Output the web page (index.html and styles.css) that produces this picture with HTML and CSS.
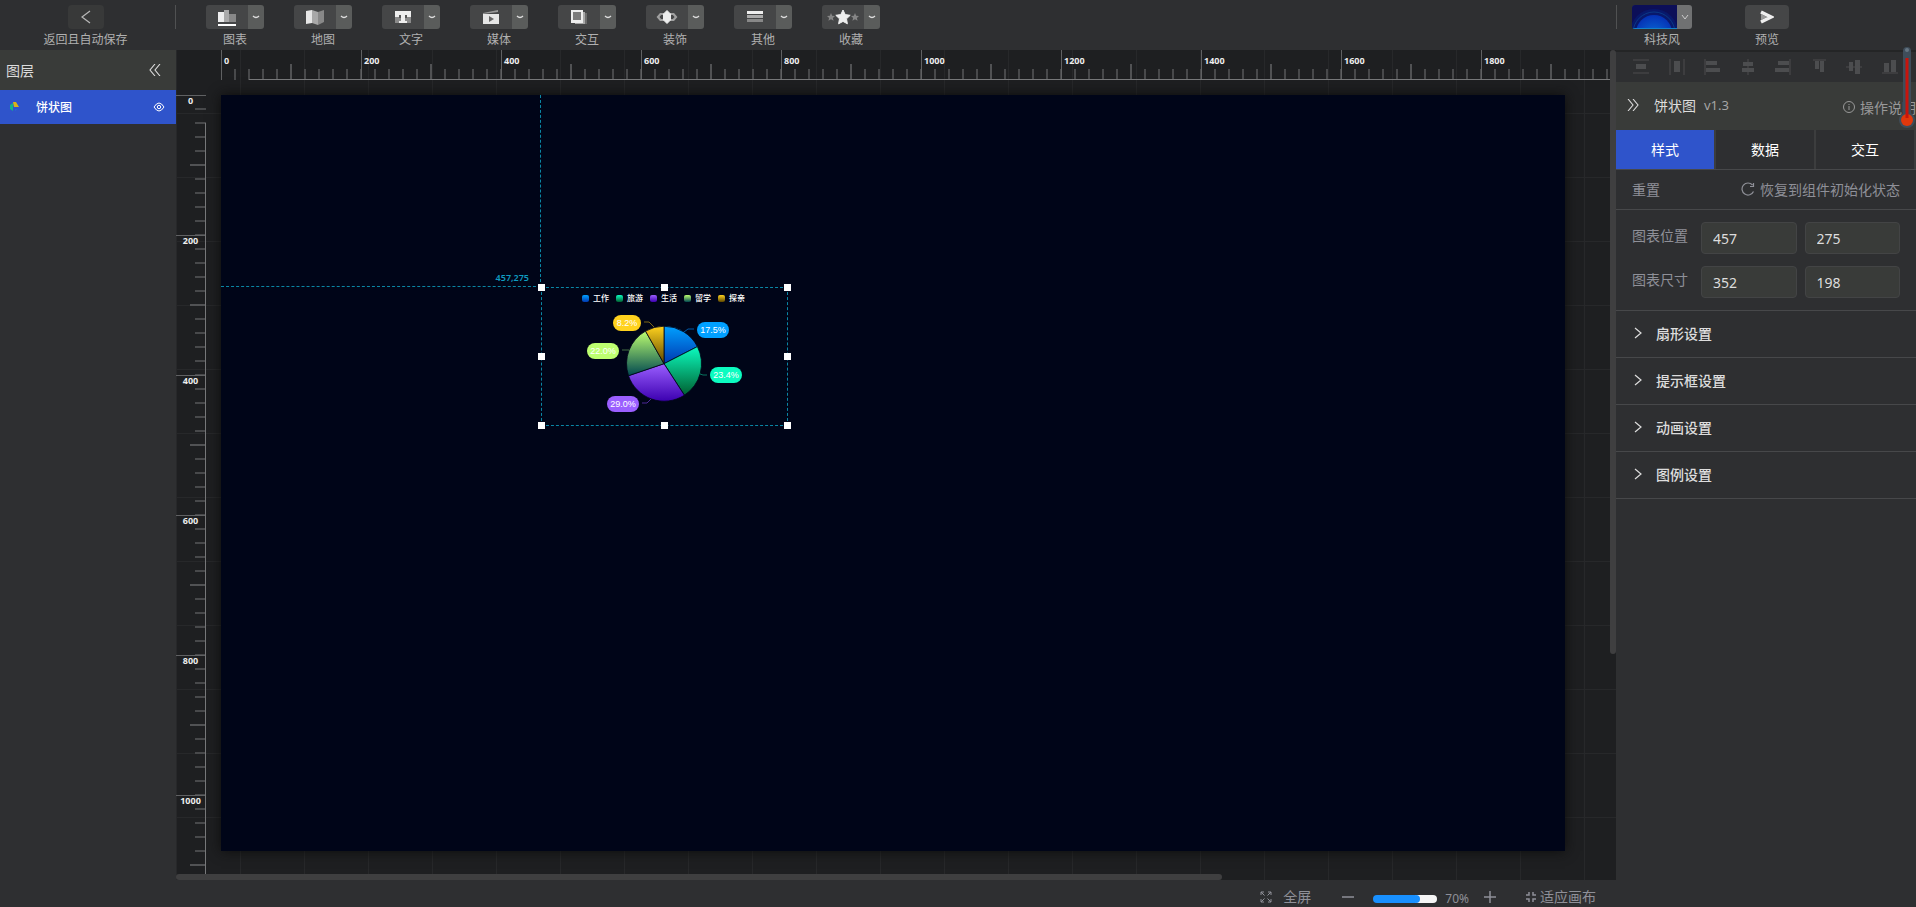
FILE: index.html
```html
<!DOCTYPE html>
<html lang="zh-CN">
<head>
  <meta charset="UTF-8" />
  <meta name="viewport" content="width=device-width, initial-scale=1" />
  <title>大屏编辑器</title>
  <link rel="stylesheet" href="styles.css">
</head>
<body>

  <!-- 图标 -->
  <svg class="defs" width="0" height="0" aria-hidden="true">
    <symbol id="i-down" viewBox="0 0 8 8"><path d="M1 3 Q4 6 7 3" fill="none" stroke="currentColor" stroke-width="1.3"/></symbol>
    <symbol id="i-right" viewBox="0 0 8 12"><path d="M1 1l6 5-6 5" fill="none" stroke="currentColor" stroke-width="1.2"/></symbol>
  </svg>

  <header class="topbar">
    <div class="tool back">
      <button class="btn" id="back" aria-labelledby="back-t">
        <svg width="10" height="14" viewBox="0 0 10 14"><path d="M9 1L1 7l8 6" fill="none" stroke="#b8b8b8" stroke-width="1.2"/></svg>
      </button>
      <span id="back-t">返回且自动保存</span>
    </div>
    <nav class="tools">
      <div class="tool">
        <div class="split">
          <button class="main" aria-label="图表"><svg width="20" height="18" viewBox="0 0 20 18"><path d="M1 4h7v10H1z" fill="#eee"/><path d="M7 2h5v12H7z" fill="#aaa"/><path d="M12 6h7v8h-7z" fill="#888"/><path d="M1 16h18v2H1z" fill="#fff"/></svg></button>
          <button class="more" aria-label="更多图表"><svg width="8" height="8"><use href="#i-down"/></svg></button>
        </div>
        <span>图表</span>
      </div>
      <div class="tool">
        <div class="split">
          <button class="main" aria-label="地图"><svg width="20" height="16" viewBox="0 0 20 16"><path d="M1 2l6-1v13l-6 1z" fill="#e6e6e6"/><path d="M7 1l6 2v13l-6-2z" fill="#a8a8a8"/><path d="M13 3l6-2v12l-6 3z" fill="#888"/></svg></button>
          <button class="more" aria-label="更多地图"><svg width="8" height="8"><use href="#i-down"/></svg></button>
        </div>
        <span>地图</span>
      </div>
      <div class="tool">
        <div class="split">
          <button class="main" aria-label="文字"><svg width="18" height="14" viewBox="0 0 18 14"><path d="M1 7h16v6H1z" fill="#8a8a8a"/><path d="M1 1h16v6H1z" fill="#eee"/><path d="M5 5h8v3H5z" fill="#555"/><path d="M7 4h4v7h2v2H5v-2h2z" fill="#eee"/></svg></button>
          <button class="more" aria-label="更多文字"><svg width="8" height="8"><use href="#i-down"/></svg></button>
        </div>
        <span>文字</span>
      </div>
      <div class="tool">
        <div class="split">
          <button class="main" aria-label="媒体"><svg width="18" height="14" viewBox="0 0 18 14"><path d="M1 3l15-3v2L1 4z" fill="#999"/><path d="M1 4h16v10H1z" fill="#e6e6e6"/><path d="M7 6l5 3-5 3z" fill="#666"/></svg></button>
          <button class="more" aria-label="更多媒体"><svg width="8" height="8"><use href="#i-down"/></svg></button>
        </div>
        <span>媒体</span>
      </div>
      <div class="tool">
        <div class="split">
          <button class="main" aria-label="交互"><svg width="16" height="16" viewBox="0 0 16 16"><path d="M11 4h5v11H9z" fill="#6c6c6c"/><path d="M11 3h3v12H4v-2h7z" fill="#a8a8a8"/><path d="M0 1h12v13H0z" fill="#eee"/><path d="M2 3h8v8H2z" fill="#7c7c7c"/></svg></button>
          <button class="more" aria-label="更多交互"><svg width="8" height="8"><use href="#i-down"/></svg></button>
        </div>
        <span>交互</span>
      </div>
      <div class="tool">
        <div class="split">
          <button class="main" aria-label="装饰"><svg width="22" height="16" viewBox="0 0 22 16"><path d="M8 5H4.500L2 8l2.500 3H8M14 5h3.500L20 8l-2.500 3H14" fill="none" stroke="#a0a0a0" stroke-width="2.200"/><path d="M11 1.500l3.500 3.500v6L11 14.500 7.500 11V5z" fill="#eee" stroke="#eee" stroke-linejoin="round"/></svg></button>
          <button class="more" aria-label="更多装饰"><svg width="8" height="8"><use href="#i-down"/></svg></button>
        </div>
        <span>装饰</span>
      </div>
      <div class="tool">
        <div class="split">
          <button class="main" aria-label="其他"><svg width="16" height="12" viewBox="0 0 16 12"><path d="M0 0h16v3H0z" fill="#eee"/><path d="M0 4h16v3H0z" fill="#aaa"/><path d="M0 8h16v3H0z" fill="#888"/></svg></button>
          <button class="more" aria-label="更多其他"><svg width="8" height="8"><use href="#i-down"/></svg></button>
        </div>
        <span>其他</span>
      </div>
      <div class="tool">
        <div class="split">
          <button class="main" aria-label="收藏"><svg width="32" height="16" viewBox="0 0 32 16"><path d="M4 4l1.200 2.700 2.800.3-2.100 1.900.7 2.900L4 10.300 1.400 11.800l.7-2.900L0 7l2.800-.3zM28 4l1.200 2.700 2.800.3-2.100 1.900.7 2.900-2.600-1.500-2.600 1.500.7-2.900L24 7l2.800-.3z" fill="#858585"/><path d="M16 1l2.200 4.600 5 .7-3.700 3.500.9 5-4.400-2.400-4.400 2.400.9-5-3.700-3.500 5-.7z" fill="#eee" stroke="#eee"/></svg></button>
          <button class="more" aria-label="更多收藏"><svg width="8" height="8"><use href="#i-down"/></svg></button>
        </div>
        <span>收藏</span>
      </div>
    </nav>
    <div class="actions">
      <div class="tool">
        <div class="split theme">
          <button class="main" aria-label="科技风">
            <svg width="45" height="24" viewBox="0 0 45 24">
              <defs><radialGradient id="glow" cx="50%" cy="60%" r="60%"><stop offset="0" stop-color="#0a6fd8"/><stop offset="1" stop-color="#0530b4"/></radialGradient></defs>
              <path d="M0 0h45v24H0z" fill="#0c0f58"/>
              <circle cx="22" cy="28" r="24" fill="#08186c"/>
              <circle cx="22" cy="28" r="21" fill="none" stroke="#0b3a86"/>
              <circle cx="22" cy="28" r="18" fill="url(#glow)"/>
              <path d="M0 23h45v1H0z" fill="#1480c8"/>
            </svg>
          </button>
          <button class="more" aria-label="切换主题"><svg width="8" height="8" viewBox="0 0 8 8"><path d="M1 2l3 4 3-4" fill="none" stroke="#ccc"/></svg></button>
        </div>
        <span>科技风</span>
      </div>
      <div class="tool preview">
        <button class="btn" aria-label="预览"><svg width="14" height="16" viewBox="0 0 14 16"><path d="M1 5l6 3-6 3z" fill="#999"/><path d="M1 3l10 5-10 5" fill="none" stroke="#eee" stroke-width="3.400"/></svg></button>
        <span>预览</span>
      </div>
    </div>
  </header>

  <div class="page">
    <aside class="layers">
      <div class="layers-head">
        <h2>图层</h2>
        <button class="icon" aria-label="收起"><svg width="12" height="12" viewBox="0 0 12 12"><path d="M6 0L1 6l5 6M11 0L6 6l5 6" fill="none" stroke="#ddd" stroke-width="1.1"/></svg></button>
      </div>
      <ul>
        <li class="layer active">
          <svg width="12" height="12" viewBox="0 0 12 12"><path d="M5 2L2 4v4l3 2z" fill="#12b48c"/><path d="M5 1h3l3 5H6z" fill="#d8b418"/><path d="M7 8h3l-3 2z" fill="#2468d8"/></svg>
          <span>饼状图</span>
          <button class="icon" aria-label="显示"><svg width="12" height="10" viewBox="0 0 12 10"><path d="M1 5q5-8 10 0q-5 8-10 0z" fill="none" stroke="#fff"/><circle cx="6" cy="5" r="1.700" fill="none" stroke="#fff"/></svg></button>
        </li>
      </ul>
    </aside>

    <main class="center">
      <div class="stage">
        <div class="ruler-x">
          <ol><li>0</li><li>200</li><li>400</li><li>600</li><li>800</li><li>1000</li><li>1200</li><li>1400</li><li>1600</li><li>1800</li></ol>
        </div>
        <div class="ruler-y">
          <ol><li>0</li><li>200</li><li>400</li><li>600</li><li>800</li><li>1000</li></ol>
        </div>
        <div class="workspace">
          <div class="canvas">
            <i class="guide guide-x"></i>
            <i class="guide guide-y"></i>
            <span class="coords">457,275</span>
            <div class="widget">
              <ul class="legend">
                <li class="c1">工作</li><li class="c2">旅游</li><li class="c3">生活</li><li class="c4">留学</li><li class="c5">探亲</li>
              </ul>
              <svg class="pie" width="246" height="138" viewBox="1 1 246 138">
                <defs>
                  <linearGradient id="g1" x2="0" y2="1"><stop stop-color="#00a0ff"/><stop offset="1" stop-color="#0038b0"/></linearGradient>
                  <linearGradient id="g2" x2="0" y2="1"><stop stop-color="#0cfcc0"/><stop offset="1" stop-color="#006030"/></linearGradient>
                  <linearGradient id="g3" x2="0" y2="1"><stop stop-color="#9b5fff"/><stop offset="1" stop-color="#3c00b0"/></linearGradient>
                  <linearGradient id="g4" x2="0" y2="1"><stop stop-color="#bdff70"/><stop offset="1" stop-color="#004850"/></linearGradient>
                  <linearGradient id="g5" x2="0" y2="1"><stop stop-color="#ffd21e"/><stop offset="1" stop-color="#5c4600"/></linearGradient>
                </defs>
                <g stroke="#000518" stroke-width=".8">
                  <path d="M123 76.700V39.200A37.500 37.500 0 0 1 156.400 59.600z" fill="url(#g1)"/>
                  <path d="M123 76.700L156.400 59.600A37.500 37.500 0 0 1 143.400 108.200z" fill="url(#g2)"/>
                  <path d="M123 76.700L143.400 108.200A37.500 37.500 0 0 1 87.500 88.700z" fill="url(#g3)"/>
                  <path d="M123 76.700L87.500 88.700A37.500 37.500 0 0 1 104.500 44.100z" fill="url(#g4)"/>
                  <path d="M123 76.700L104.500 44.100A37.500 37.500 0 0 1 123 39.200z" fill="url(#g5)"/>
                </g>
                <g fill="none" stroke-opacity=".6">
                  <path d="M143 45l4-3h6" stroke="#008cff"/>
                  <path d="M159 87l3 1h4" stroke="#0cc090"/>
                  <path d="M110 112l-4 4h-5" stroke="#8040f0"/>
                  <path d="M88 63h-7" stroke="#70b060"/>
                  <path d="M113 40l-5-5h-5" stroke="#d0a818"/>
                </g>
                <rect x="156" y="35" width="32" height="16" rx="8" fill="#00a0ff"/>
                <rect x="169" y="80" width="32" height="16" rx="8" fill="#0cfcc0"/>
                <rect x="66" y="109" width="32" height="16" rx="8" fill="#9b5fff"/>
                <rect x="46" y="56" width="32" height="16" rx="8" fill="#bdff70"/>
                <rect x="72" y="28" width="28" height="16" rx="8" fill="#ffd21e"/>
                <g class="pct">
                  <text x="172" y="46">17.5%</text>
                  <text x="185" y="91">23.4%</text>
                  <text x="82" y="120">29.0%</text>
                  <text x="62" y="67">22.0%</text>
                  <text x="86" y="39">8.2%</text>
                </g>
              </svg>
              <i class="grip n w"></i><i class="grip n"></i><i class="grip n e"></i>
              <i class="grip w"></i><i class="grip e"></i>
              <i class="grip s w"></i><i class="grip s"></i><i class="grip s e"></i>
            </div>
          </div>
        </div>
        <i class="bar-x"></i>
        <i class="bar-y"></i>
      </div>
      <footer class="zoombar">
        <button class="full"><svg width="12" height="12" viewBox="0 0 12 12"><path d="M1 4V1h3M1 1l3.500 3.500M8 1h3v3M11 1L7.500 4.500M1 8v3h3M1 11l3.500-3.500M11 8v3H8M11 11L7.500 7.500" fill="none" stroke="currentColor"/></svg>全屏</button>
        <button class="minus" aria-label="缩小"><svg width="12" height="12"><path d="M0 6h12" stroke="currentColor" stroke-width="1.500"/></svg></button>
        <input type="range" min="0" max="100" value="70" aria-label="缩放">
        <output>70%</output>
        <button class="plus" aria-label="放大"><svg width="12" height="12"><path d="M0 6h12M6 0v12" stroke="currentColor" stroke-width="1.500"/></svg></button>
        <button class="fit"><svg width="10" height="10" viewBox="0 0 10 10"><path d="M0 3h3V0M7 0v3h3M0 7h3v3M10 7H7v3" fill="none" stroke="currentColor" stroke-width="1.500"/></svg>适应画布</button>
      </footer>
    </main>

    <aside class="panel">
      <div class="align">
        <button aria-label="垂直等距"><svg width="16" height="16"><path d="M0 1h16M0 14h16" stroke="currentColor"/><path d="M3 5h10v5H3z" fill="currentColor"/></svg></button>
        <button aria-label="水平等距"><svg width="16" height="16"><path d="M1 0v16M15 0v16" stroke="currentColor"/><path d="M5 2h6v11H5z" fill="currentColor"/></svg></button>
        <button aria-label="左对齐"><svg width="16" height="16"><path d="M1 0v16" stroke="currentColor"/><path d="M2 2h11v4H2zM2 9h14v4H2z" fill="currentColor"/></svg></button>
        <button aria-label="水平居中"><svg width="16" height="16"><path d="M8 0v16" stroke="currentColor"/><path d="M3 3h10v4H3zM2 9h12v4H2z" fill="currentColor"/></svg></button>
        <button aria-label="右对齐"><svg width="16" height="16"><path d="M15 0v16" stroke="currentColor"/><path d="M3 2h11v4H3zM0 9h14v4H0z" fill="currentColor"/></svg></button>
        <button aria-label="顶对齐"><svg width="16" height="16"><path d="M2 1h13" stroke="currentColor"/><path d="M4 2h4v8H4zM9 2h4v11H9z" fill="currentColor"/></svg></button>
        <button aria-label="垂直居中"><svg width="16" height="16"><path d="M0 8h16" stroke="currentColor"/><path d="M3 3h4v9H3zM9 1h5v14H9z" fill="currentColor"/></svg></button>
        <button aria-label="底对齐"><svg width="16" height="16"><path d="M0 14h16" stroke="currentColor"/><path d="M2 4h5v9H2zM9 1h5v12H9z" fill="currentColor"/></svg></button>
      </div>
      <div class="panel-head">
        <button class="icon" aria-label="收起面板"><svg width="12" height="12" viewBox="0 0 12 12"><path d="M1 0l5 6-5 6M6 0l5 6-5 6" fill="none" stroke="#ddd" stroke-width="1.100"/></svg></button>
        <h2>饼状图</h2><small>v1.3</small>
        <a href="#help"><svg width="12" height="12" viewBox="0 0 12 12"><circle cx="6" cy="6" r="5.500" fill="none" stroke="currentColor"/><path d="M6 3v1M6 5v4" stroke="currentColor"/></svg>操作说明</a>
      </div>
      <div class="tabs">
        <button class="active">样式</button><button>数据</button><button>交互</button>
      </div>
      <div class="reset">
        <span>重置</span>
        <button><svg width="14" height="14" viewBox="0 0 14 14"><path d="M11.500 3A6 6 0 1 0 12.500 9.500M12.500 1v3.500H9" fill="none" stroke="currentColor" stroke-width="1.200"/></svg>恢复到组件初始化状态</button>
      </div>
      <form class="fields">
        <label for="px">图表位置</label><input id="px" type="text" value="457"><input type="text" value="275" aria-label="图表位置 Y">
        <label for="sw">图表尺寸</label><input id="sw" type="text" value="352"><input type="text" value="198" aria-label="图表尺寸 高">
      </form>
      <button class="fold"><svg width="8" height="12"><use href="#i-right"/></svg>扇形设置</button>
      <button class="fold"><svg width="8" height="12"><use href="#i-right"/></svg>提示框设置</button>
      <button class="fold"><svg width="8" height="12"><use href="#i-right"/></svg>动画设置</button>
      <button class="fold"><svg width="8" height="12"><use href="#i-right"/></svg>图例设置</button>
    </aside>
  </div>

  <!-- 温度计挂件 -->
  <svg class="thermo" width="18" height="84" viewBox="0 0 18 84" aria-hidden="true">
    <rect x="5" y="0" width="8" height="74" rx="4" fill="#3f4d5a"/>
    <circle cx="9" cy="73" r="8" fill="#3f4d5a"/>
    <circle cx="9" cy="73" r="6" fill="#e0380c"/>
    <path d="M9 11v60" stroke="#c8140c" stroke-width="3"/>
    <circle cx="9" cy="3" r="2" fill="#667582"/>
  </svg>

</body>
</html>
```
FILE: styles.css
```css
* {
  margin: 0;
  padding: 0;
  box-sizing: border-box;
}
body {
  height: 100vh;
  display: flex;
  flex-direction: column;
  overflow: hidden;
  background: #2e2f31;
  color: #ddd;
  font-family: "Noto Sans", "Noto Sans CJK SC", sans-serif;
  font-size: 14px;
}
button {
  border: none;
  background: none;
  color: inherit;
  font: inherit;
  cursor: pointer;
}
ul, ol {
  list-style: none;
}
h2 {
  font-size: 14px;
  font-weight: normal;
}
svg {
  display: block;
  flex: none;
}
.defs {
  position: absolute;
}
.icon {
  display: flex;
}

/* 顶部工具栏 */
.topbar {
  flex: none;
  height: 50px;
  padding-top: 5px;
  display: flex;
  font-size: 12px;
  color: #b0b0b0;
}
.tool {
  display: flex;
  flex-direction: column;
  align-items: center;
  gap: 3px;
  line-height: 16px;
}
.back {
  width: 176px;
  height: 24px;
  padding-right: 4px;
  border-right: 1px solid #505152;
}
.btn {
  flex: none;
  width: 44px;
  height: 24px;
  border-radius: 4px;
  background: #454647;
  display: flex;
  align-items: center;
  justify-content: center;
}
.back .btn {
  width: 36px;
  background: #383939;
}
.tools {
  flex: 1;
  padding-left: 30px;
  display: flex;
  gap: 30px;
}
.split {
  flex: none;
  display: flex;
  height: 24px;
  border-radius: 3px;
  overflow: hidden;
}
.split .main, .split .more {
  display: flex;
  align-items: center;
  justify-content: center;
}
.split .main {
  width: 42px;
  background: #454647;
}
.split .more {
  width: 16px;
  background: #5a5c5b;
  color: #ddd;
}
.actions {
  width: 300px;
  height: 24px;
  padding-left: 15px;
  border-left: 1px solid #505152;
  display: flex;
  gap: 53px;
}
.split.theme .main {
  width: 45px;
}
.split.theme .more {
  width: 15px;
  background: #707172;
}

.page {
  flex: 1;
  min-height: 0;
  display: flex;
}

/* 图层 */
.layers {
  width: 176px;
}
.layers-head {
  height: 40px;
  padding: 0 15px 0 6px;
  display: flex;
  align-items: center;
  justify-content: space-between;
  background: #393b39;
}
.layer {
  height: 34px;
  padding: 0 11px 0 8px;
  display: flex;
  align-items: center;
  gap: 16px;
  font-size: 12px;
  font-weight: 500;
  color: #fff;
}
.layer.active {
  background: #2f54cb;
}
.layer .icon {
  margin-left: auto;
}

/* 画布区 */
.center {
  flex: 1;
  min-width: 0;
  display: flex;
  flex-direction: column;
}
.stage {
  position: relative;
  flex: 1;
  min-height: 0;
  padding: 0 6px 6px 0;
  display: grid;
  grid-template: 30px 1fr / 30px 1fr;
  overflow: hidden;
  background-color: #1e1f21;
  background-image:
    linear-gradient(90deg, #27282a 1px, transparent 1px),
    linear-gradient(#27282a 1px, transparent 1px);
  background-size: 64px 64px;
  background-position: 0 -1px;
}
.ruler-x, .ruler-y {
  overflow: hidden;
  font-family: "Open Sans", sans-serif;
  font-size: 9px;
  font-weight: bold;
  line-height: 12px;
  color: #eee;
}
.ruler-x {
  grid-area: 1 / 2;
  padding-left: 15px;
}
.ruler-x ol {
  height: 30px;
  display: flex;
  background:
    linear-gradient(#77787a, #77787a) 28px 29px / 100% 1px no-repeat,
    linear-gradient(90deg, #606163 1px, transparent 1px) 0 0 / 140px 30px repeat-x,
    linear-gradient(90deg, #515254 2px, transparent 2px) 69px 14px / 140px 16px repeat-x,
    linear-gradient(90deg, #48494b 2px, transparent 2px) -1px 19px / 14px 11px repeat-x;
}
.ruler-x li {
  flex: none;
  width: 140px;
  padding: 5px 0 0 3px;
}
.ruler-y {
  grid-area: 2 / 1;
  padding-top: 15px;
}
.ruler-y ol {
  height: 100%;
  background:
    linear-gradient(#77787a, #77787a) 29px 28px / 1px 100% no-repeat,
    linear-gradient(#606163 1px, transparent 1px) 0 0 / 30px 140px repeat-y,
    linear-gradient(#515254 2px, transparent 2px) 14px 69px / 16px 140px repeat-y,
    linear-gradient(#48494b 2px, transparent 2px) 19px -1px / 11px 14px repeat-y;
}
.ruler-y li {
  height: 140px;
  padding-right: 1px;
  text-align: center;
}
.workspace {
  grid-area: 2 / 2;
  min-width: 0;
  padding: 15px;
}
/* 1920x1080, 70% */
.canvas {
  position: relative;
  width: 1344px;
  height: 756px;
  background: #000518;
  box-shadow: 0 0 12px #0c0c0c;
}
.guide {
  position: absolute;
}
.guide-x {
  top: 191px;
  left: 0;
  width: 320px;
  border-top: 1px dashed #0a86a4;
}
.guide-y {
  top: 0;
  left: 319px;
  height: 192px;
  border-left: 1px dashed #0a86a4;
}
.coords {
  position: absolute;
  right: 1036px;
  top: 176px;
  font-size: 9px;
  font-weight: 600;
  line-height: 14px;
  color: #0f9cc0;
}
.widget {
  position: absolute;
  left: 320px;
  top: 192px;
  width: 247px;
  height: 139px;
  border: 1px dashed #0a86a4;
}
.legend {
  position: absolute;
  top: 4px;
  left: 0;
  right: 2px;
  display: flex;
  justify-content: center;
  gap: 7px;
  font-size: 8px;
  font-weight: 500;
  line-height: 12px;
  color: #fff;
}
.legend li {
  display: flex;
  align-items: center;
  gap: 4px;
}
.legend li::before {
  content: "";
  width: 7px;
  height: 7px;
  border-radius: 2px;
}
.c1::before { background: linear-gradient(#00a0ff, #0038b0); }
.c2::before { background: linear-gradient(#0cfcc0, #006030); }
.c3::before { background: linear-gradient(#9b5fff, #3c00b0); }
.c4::before { background: linear-gradient(#bdff70, #004850); }
.c5::before { background: linear-gradient(#ffd21e, #5c4600); }
.pct {
  font-family: "Liberation Sans", sans-serif;
  font-size: 9px;
  fill: #fff;
  text-anchor: middle;
}
.grip {
  position: absolute;
  left: calc(50% - 4px);
  top: calc(50% - 4px);
  width: 7px;
  height: 7px;
  background: #fff;
}
.grip.n { top: -4px; }
.grip.s { top: calc(100% - 3px); }
.grip.w { left: -4px; }
.grip.e { left: calc(100% - 3px); }
.bar-x, .bar-y {
  position: absolute;
  border-radius: 3px;
  background: #3f3f40;
}
.bar-x {
  left: 0;
  bottom: 0;
  width: 1046px;
  height: 6px;
}
.bar-y {
  top: 0;
  right: 0;
  width: 6px;
  height: 604px;
}

.zoombar {
  height: 27px;
  padding: 7px 20px 0 0;
  display: flex;
  align-items: center;
  justify-content: flex-end;
  line-height: 20px;
  color: #8f9098;
}
.zoombar button {
  display: flex;
  align-items: center;
}
.full {
  gap: 11px;
}
.minus {
  margin: 0 19px 0 31px;
}
.zoombar input {
  appearance: none;
  width: 64px;
  height: 8px;
  margin-top: 4px;
  border-radius: 4px;
  overflow: hidden;
  background: linear-gradient(90deg, #1890ff 66%, #f5f5f5 66%);
}
.zoombar input::-webkit-slider-thumb {
  appearance: none;
  width: 8px;
  height: 8px;
  border-radius: 4px;
  background: #1890ff;
}
.zoombar output {
  margin-left: 8px;
  padding-top: 4px;
  font-size: 12px;
}
.plus {
  margin: 0 30px 0 15px;
}
.fit {
  gap: 4px;
}

/* 属性面板 */
.panel {
  width: 300px;
  border-top: 2px solid #242526;
}
.align {
  height: 30px;
  padding: 0 18px 0 17px;
  display: flex;
  align-items: center;
  justify-content: space-between;
  color: #4c4d4f;
}
.panel-head {
  height: 48px;
  padding: 0 0 2px 11px;
  display: flex;
  align-items: center;
  background: #393b39;
}
.panel-head h2 {
  margin: 0 8px 0 15px;
}
.panel-head small {
  font-size: 13px;
  color: #a5a5a5;
}
.panel-head a {
  margin-left: auto;
  padding-top: 4px;
  display: flex;
  align-items: center;
  gap: 5px;
  color: #999;
  text-decoration: none;
}
.tabs {
  height: 40px;
  padding-right: 2px;
  display: flex;
  gap: 2px;
  background: #3c3d3e;
  border-bottom: 1px solid #47484a;
}
.tabs button {
  flex: 1;
  padding-bottom: 2px;
  background: #2e2f31;
  color: #fff;
}
.tabs .active {
  background: #2f54cb;
}
.reset {
  height: 40px;
  padding: 0 16px 2px;
  display: flex;
  align-items: center;
  justify-content: space-between;
  border-bottom: 1px solid #47484a;
  color: #8f9098;
}
.reset button {
  display: flex;
  align-items: center;
  gap: 5px;
}
.fields {
  padding: 12px 16px;
  display: grid;
  grid-template-columns: 61px 1fr 1fr;
  gap: 12px 8px;
  border-bottom: 1px solid #47484a;
  color: #8f9098;
}
.fields label {
  line-height: 28px;
  white-space: nowrap;
}
.fields input {
  min-width: 0;
  height: 32px;
  padding: 0 11px;
  border: 1px solid #434445;
  border-radius: 4px;
  background: #393b39;
  color: #ddd;
  font: inherit;
}
.fold {
  width: 100%;
  height: 47px;
  padding: 0 18px 2px;
  display: flex;
  align-items: center;
  gap: 14px;
  font-weight: 500;
  border-bottom: 1px solid #47484a;
}

.thermo {
  position: absolute;
  top: 47px;
  right: 0;
}
```
